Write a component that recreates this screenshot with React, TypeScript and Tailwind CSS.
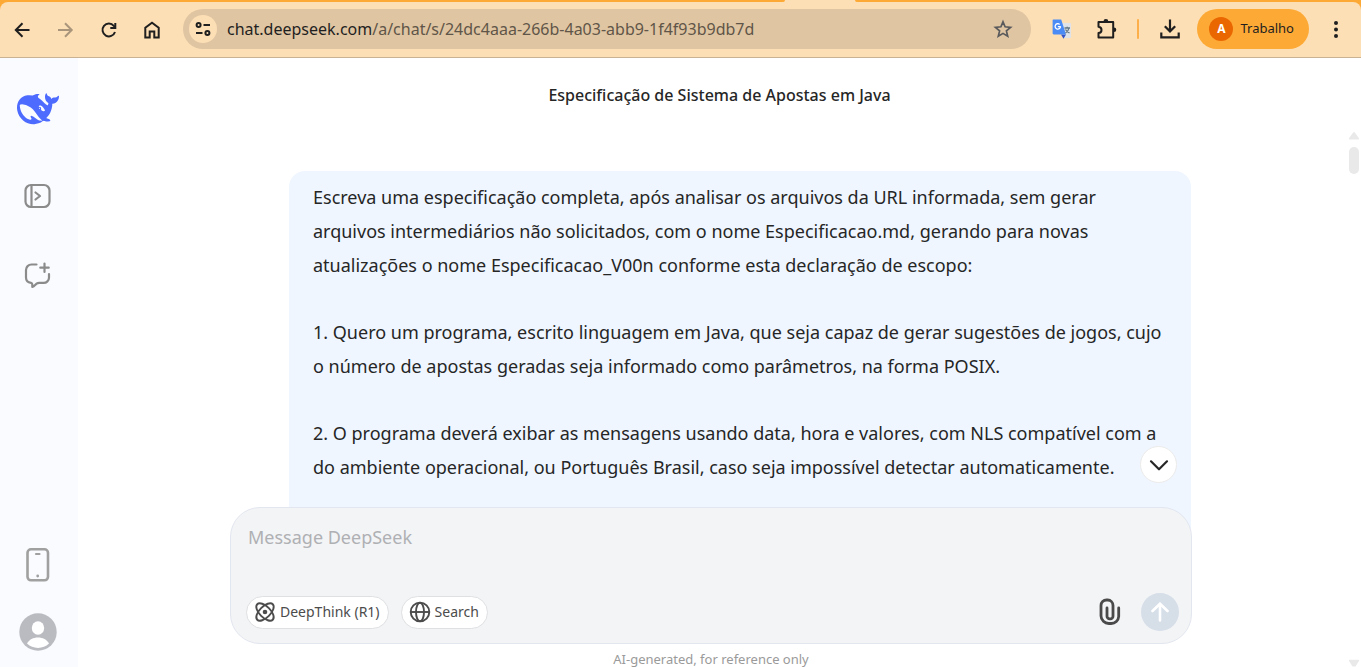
import React from "react";

const iconButton = "flex shrink-0 items-center justify-center";

const paragraphs: string[][] = [
  [
    "Escreva uma especificação completa, após analisar os arquivos da URL informada, sem gerar",
    "arquivos intermediários não solicitados, com o nome Especificacao.md, gerando para novas",
    "atualizações o nome Especificacao_V00n conforme esta declaração de escopo:",
  ],
  [
    "1. Quero um programa, escrito linguagem em Java, que seja capaz de gerar sugestões de jogos, cujo",
    "o número de apostas geradas seja informado como parâmetros, na forma POSIX.",
  ],
  [
    "2. O programa deverá exibar as mensagens usando data, hora e valores, com NLS compatível com a",
    "do ambiente operacional, ou Português Brasil, caso seja impossível detectar automaticamente.",
  ],
];

function TabEdge() {
  return (
    <div className="flex h-[2px] shrink-0 bg-[#fddfb5]" aria-hidden="true">
      <div className="w-[785px] shrink-0 rounded-br-sm bg-[#fda936]" />
      <div className="w-[70px] shrink-0" />
      <div className="grow rounded-bl-sm bg-[#fda936]" />
    </div>
  );
}

function Toolbar() {
  return (
    <div className="shrink-0 bg-[#fda936]">
      <header className="flex h-14 items-center rounded-t-lg border-b border-[#c9b193] bg-[#fddfb5] pb-0.5 pl-2.5 pr-[13px] text-[#1f1f1f]">
        <nav className="flex items-center gap-[19px] pt-0.5" aria-label="Navegação">
          <button type="button" aria-label="Voltar" className={iconButton}>
            <svg width="24" height="24" viewBox="0 0 24 24" fill="none" stroke="currentColor" strokeWidth="2">
              <path d="M19.5 12H6M12.5 5.3L5.8 12l6.7 6.7" />
            </svg>
          </button>
          <button type="button" aria-label="Avançar" className={`${iconButton} text-[#a8957b]`}>
            <svg width="24" height="24" viewBox="0 0 24 24" fill="none" stroke="currentColor" strokeWidth="2">
              <path d="M5 12h13.5M12 5.3l6.7 6.7-6.7 6.7" />
            </svg>
          </button>
          <button type="button" aria-label="Recarregar" className={iconButton}>
            <svg width="24" height="24" viewBox="0 0 24 24" fill="none" stroke="currentColor" strokeWidth="2">
              <path d="M19 14A6.4 6.4 0 1 1 17.8 7.8l1.4 1.6" />
              <path d="M19.3 5v5h-5" />
            </svg>
          </button>
          <button type="button" aria-label="Página inicial" className={iconButton}>
            <svg width="24" height="24" viewBox="0 0 24 24" fill="none" stroke="currentColor" strokeWidth="2">
              <path d="M6.300 19.600V9.700L13 4.700l6.700 5v9.900h-4.400v-6h-4.600v6z" />
            </svg>
          </button>
        </nav>
        <div className="ml-5 flex h-10 min-w-0 grow items-center rounded-full bg-[#dfc5a2] pl-1.5 pr-4">
          <button type="button" aria-label="Informações do site" className="flex size-7 shrink-0 items-center justify-center rounded-full bg-[#fddfb5]">
            <svg width="16" height="16" viewBox="0 0 16 16" fill="none" stroke="currentColor" strokeWidth="2">
              <circle cx="3.6" cy="4" r="2" />
              <path d="M8.5 4H15M1 12h6.5" />
              <circle cx="12.4" cy="12" r="2" />
            </svg>
          </button>
          <div className="ml-2.5 grow truncate text-base text-[#5f5548]">
            <span className="text-[#1f1f1f]">chat.deepseek.com</span>/a/chat/s/24dc4aaa-266b-4a03-abb9-1f4f93b9db7d
          </div>
          <button type="button" aria-label="Adicionar aos favoritos" className={`${iconButton} text-[#5a5a5c]`}>
            <svg width="24" height="24" viewBox="0 0 24 24" fill="none" stroke="currentColor" strokeWidth="1.7">
              <path d="M12 4.8l2.1 5 5.5.5-4.2 3.6 1.3 5.4-4.7-2.9-4.7 2.9 1.3-5.4-4.2-3.6 5.5-.5z" />
            </svg>
          </button>
        </div>
        <div className="flex shrink-0 items-center">
          <button type="button" aria-label="Google Tradutor" className={`${iconButton} ml-[21px]`}>
            <svg width="20" height="20" viewBox="0 0 20 20">
              <path d="M8 4h10.2c.5 0 .8.3.8.8v13.4c0 .5-.3.8-.8.8H12z" fill="#dfe3e8" />
              <path d="M9 15.500h5L11.500 19.800z" fill="#3352c4" />
              <path d="M1.2.5h8L14 15.5H1.8c-.7 0-1.2-.5-1.2-1.2V1.1c0-.3.3-.6.6-.6z" fill="#4b8bf5" />
              <path d="M8.5 7.3a2.7 2.7 0 1 1-.9-1.9M8.5 7.600H5.900" fill="none" stroke="#fff" strokeWidth="1.3" />
              <path d="M12.500 9h5.500M15.200 7.700V9M17 9c-.4 2.300-2 4-3.500 5M13.500 10.500c.8 1.500 2.200 2.700 4 3.500" fill="none" stroke="#647985" strokeWidth="1.3" />
            </svg>
          </button>
          <button type="button" aria-label="Extensões" className={`${iconButton} ml-[22px]`}>
            <svg width="24" height="24" viewBox="0 0 24 24" fill="none" stroke="currentColor" strokeWidth="2">
              <path d="M4.500 5h14.700v15.500H4.500v-4.400c2.200-.3 3-1.700 3-3.200s-.8-2.900-3-3.200z" strokeLinejoin="round" />
              <path d="M9.500 4.300a2.400 2.400 0 0 1 4.800 0zM20 10.400a2.300 2.300 0 0 1 0 4.600z" fill="currentColor" stroke="none" />
            </svg>
          </button>
          <div className="ml-[19px] h-5 w-0.5 rounded-full bg-[#fdb04a]" />
          <button type="button" aria-label="Downloads" className={`${iconButton} ml-[19px]`}>
            <svg width="24" height="24" viewBox="0 0 24 24" fill="none" stroke="currentColor" strokeWidth="2.200">
              <path d="M12 2.500v11.500M6.800 9.200l5.200 5.200 5.200-5.200M3.300 15.500v4.800h17.400v-4.800" />
            </svg>
          </button>
          <button type="button" className="ml-[15px] flex h-10 items-center rounded-full bg-[#fda936] pl-3 pr-[15px] text-[13px]">
            <span className="mr-[7px] flex size-6 items-center justify-center rounded-full bg-[#ea6700] text-xs font-bold text-white">A</span>
            Trabalho
          </button>
          <button type="button" aria-label="Menu" className={`${iconButton} ml-[15px]`}>
            <svg width="24" height="24" viewBox="0 0 24 24" fill="currentColor">
              <circle cx="12" cy="6" r="2" />
              <circle cx="12" cy="12.500" r="2" />
              <circle cx="12" cy="19" r="2" />
            </svg>
          </button>
        </div>
      </header>
    </div>
  );
}

function Whale() {
  return (
    <svg width="42" height="42" viewBox="0 0 24 24" fill="#4d6bfe">
      <path d="M23.748 4.482c-.254-.124-.364.113-.512.234-.051.039-.094.09-.137.136-.372.397-.806.657-1.373.626-.829-.046-1.537.214-2.163.848-.133-.782-.575-1.248-1.247-1.548-.352-.156-.708-.311-.955-.65-.172-.241-.219-.51-.305-.774-.055-.16-.11-.323-.293-.35-.2-.031-.278.136-.356.276-.313.572-.434 1.202-.422 1.84.027 1.436.633 2.58 1.838 3.393.137.093.172.187.129.323-.082.28-.18.552-.266.833-.055.179-.137.217-.329.14a5.526 5.526 0 01-1.736-1.18c-.857-.828-1.631-1.742-2.597-2.458a11.365 11.365 0 00-.689-.471c-.985-.957.13-1.743.388-1.836.27-.098.093-.432-.779-.428-.872.004-1.67.295-2.687.684a3.055 3.055 0 01-.465.137 9.597 9.597 0 00-2.883-.102c-1.885.21-3.39 1.102-4.497 2.623C.082 8.606-.231 10.684.152 12.85c.403 2.284 1.569 4.175 3.36 5.653 1.858 1.533 3.997 2.284 6.438 2.14 1.482-.085 3.133-.284 4.994-1.86.47.234.962.327 1.78.397.63.059 1.236-.03 1.705-.128.735-.156.684-.837.419-.961-2.155-1.004-1.682-.595-2.113-.926 1.096-1.296 2.746-2.642 3.392-7.003.05-.347.007-.565 0-.845-.004-.17.035-.237.23-.256a4.173 4.173 0 001.545-.475c1.396-.763 1.96-2.015 2.093-3.517.02-.23-.004-.467-.247-.588zM11.581 18c-2.089-1.642-3.102-2.183-3.52-2.16-.392.024-.321.471-.235.763.09.288.207.486.371.739.114.167.192.416-.113.603-.673.416-1.842-.14-1.897-.167-1.361-.802-2.5-1.86-3.301-3.307-.774-1.393-1.224-2.887-1.298-4.482-.02-.386.093-.522.477-.592a4.696 4.696 0 011.529-.039c2.132.312 3.946 1.265 5.468 2.774.868.86 1.525 1.887 2.202 2.891.72 1.066 1.494 2.082 2.48 2.914.348.292.625.514.891.677-.802.09-2.14.11-3.054-.614zm1-6.44a.306.306 0 01.415-.287.302.302 0 01.2.288.306.306 0 01-.31.307.303.303 0 01-.304-.308zm3.11 1.596c-.2.081-.399.151-.59.16a1.245 1.245 0 01-.798-.254c-.274-.23-.47-.358-.552-.758a1.73 1.73 0 01.016-.588c.07-.327-.008-.537-.239-.727-.187-.156-.426-.199-.688-.199a.559.559 0 01-.254-.078c-.11-.054-.2-.19-.114-.358.028-.054.16-.186.192-.21.356-.202.767-.136 1.146.016.352.144.618.408 1.001.782.391.451.462.576.685.914.176.265.336.537.445.848.067.195-.019.354-.25.452z" />
    </svg>
  );
}

function Sidebar() {
  return (
    <aside className="flex w-[78px] shrink-0 flex-col items-center bg-[#f9fbff] pb-4 pr-[3px] pt-[30px] text-[#8b8b8b]">
      <a href="#" aria-label="DeepSeek">
        <Whale />
      </a>
      <button type="button" aria-label="Open sidebar" className="mt-[52px]">
        <svg width="28" height="28" viewBox="0 0 28 28" fill="none" stroke="currentColor" strokeWidth="2.200" strokeLinecap="round" strokeLinejoin="round">
          <rect x="1.500" y="3" width="24" height="22" rx="5.500" />
          <path d="M7.500 3v22" />
          <path d="M11.500 10.500l4.500 3.500-4.500 3.500" />
        </svg>
      </button>
      <button type="button" aria-label="New chat" className="mt-[51px]">
        <svg width="28" height="28" viewBox="0 0 28 28" fill="none" stroke="currentColor" strokeWidth="2.200" strokeLinecap="round" strokeLinejoin="round">
          <path d="M12.500 3.500H7.500A5.500 5.500 0 0 0 2 9v7.500c0 3 2 5 5 5.300 1 .2 1.300.8 1.300 1.700v2.500c2-.5 3-2.300 4.300-3.300.8-.6 1.600-.8 2.600-.8h4.300a5.300 5.300 0 0 0 5.500-5.400V13" />
          <path d="M20.500 2.500v8.400M16.300 6.700h8.400" />
        </svg>
      </button>
      <div className="mt-auto flex flex-col items-center gap-[30px]">
        <button type="button" aria-label="Get app">
          <svg width="24" height="36" viewBox="0 0 24 36" fill="none" stroke="#a0a0a0" strokeWidth="2.600" strokeLinecap="round">
            <rect x="1.500" y="2.300" width="20.500" height="31" rx="3.500" />
            <path d="M10 7h3.500" strokeWidth="2.200" />
            <circle cx="11.700" cy="29" r="1.400" fill="#a0a0a0" stroke="none" />
          </svg>
        </button>
        <button type="button" aria-label="Account">
          <svg width="38" height="38" viewBox="0 0 38 38">
            <circle cx="19" cy="19" r="18.700" fill="#babbc1" />
            <ellipse cx="19" cy="15" rx="6.200" ry="6.700" fill="#fff" />
            <path d="M8 30.500c2.200-4 6.300-6 11-6s8.800 2 11 6a16 16 0 0 1-22 0z" fill="#fff" />
          </svg>
        </button>
      </div>
    </aside>
  );
}

const pill =
  "flex h-[33px] items-center gap-1 rounded-full border border-[#dfe0e2] bg-white pl-[7px] pr-2 text-sm text-[#4c4c4c]";

function Composer() {
  return (
    <form
      className="relative flex h-[137px] flex-col justify-between rounded-[30px] border border-[#e2e6ef] bg-[#f3f4f6] pb-3 pl-[15px] pr-3 pt-[15px]"
      onSubmit={(e: React.FormEvent) => e.preventDefault()}
    >
      <button
        type="button"
        aria-label="Scroll to bottom"
        className="absolute -top-[62px] right-3.5 flex size-[37px] items-center justify-center rounded-full border border-[#ecebea] bg-white text-[#262626]"
      >
        <svg width="20" height="20" viewBox="0 0 20 20" fill="none" stroke="currentColor" strokeWidth="2.200" strokeLinecap="round" strokeLinejoin="round">
          <path d="M2 6.300l8 8 8-8" />
        </svg>
      </button>
      <textarea
        aria-label="Message DeepSeek"
        placeholder="Message DeepSeek"
        rows={1}
        className="block h-7 w-full resize-none overflow-hidden bg-transparent pl-0.5 text-lg text-[#262626] outline-none placeholder:text-[#afb0b3]"
      />
      <div className="flex items-center">
        <button type="button" className={pill}>
          <svg width="22" height="22" viewBox="0 0 22 22" fill="none" stroke="currentColor" strokeWidth="1.900">
            <ellipse cx="11" cy="11" rx="11" ry="5.500" transform="rotate(45 11 11)" />
            <ellipse cx="11" cy="11" rx="11" ry="5.500" transform="rotate(-45 11 11)" />
            <circle cx="11" cy="11" r="2.300" fill="currentColor" stroke="none" />
          </svg>
          DeepThink (R1)
        </button>
        <button type="button" className={`${pill} ml-3`}>
          <svg width="22" height="22" viewBox="0 0 22 22" fill="none" stroke="currentColor" strokeWidth="1.900">
            <circle cx="11" cy="11" r="9.300" />
            <ellipse cx="11" cy="11" rx="4" ry="9.300" />
            <path d="M1.700 11h18.600" />
          </svg>
          Search
        </button>
        <button type="button" aria-label="Attach file" className="ml-auto text-[#4a4a4a]">
          <svg width="22" height="28" viewBox="0 0 22 28" fill="none" stroke="currentColor" strokeWidth="2.800" strokeLinecap="round">
            <path d="M19.700 10v8.500a7.500 7.500 0 0 1-7.500 7h-2.400a7.800 7.800 0 0 1-7.800-7.500V7.500A5.500 5.500 0 0 1 7.500 2h1.200a5.500 5.500 0 0 1 5.300 5.500v10.700a2.600 2.600 0 0 1-2.600 2.600h-.8a2.600 2.600 0 0 1-2.600-2.600V10" />
          </svg>
        </button>
        <button type="submit" aria-label="Send" className="ml-5 flex size-[38px] items-center justify-center rounded-full bg-[#d6dee8] text-white">
          <svg width="20" height="20" viewBox="0 0 20 20" fill="none" stroke="currentColor" strokeWidth="2.600" strokeLinecap="round">
            <path d="M10 18.500V2M2.500 9L10 1.700 17.500 9" />
          </svg>
        </button>
      </div>
    </form>
  );
}

function Scrollbar() {
  return (
    <div className="flex w-[17px] shrink-0 flex-col items-center pl-[3px] pt-2.5" aria-hidden="true">
      <svg width="12" height="10" viewBox="0 0 12 10" fill="#e9e9e9">
        <path d="M5 1.800q1-1.400 2 0l4 5.500q.6 1.200-.8 1.200H1.800q-1.400 0-.8-1.200z" />
      </svg>
      <div className="mt-1.5 h-[27px] w-2.5 rounded-full bg-[#e9e9e9]" />
      <svg className="mt-auto" width="12" height="8" viewBox="0 0 12 8" fill="#e9e9e9">
        <path d="M1.800.700h8.400q1.400 0 .8 1.200L7.500 7.500h-3L1 1.900Q.4.700 1.800.700z" />
      </svg>
    </div>
  );
}

export default function App() {
  return (
    <div className="flex h-screen flex-col overflow-hidden bg-white font-['Noto_Sans','Open_Sans',sans-serif]">
      <TabEdge />
      <Toolbar />
      <div className="flex min-h-0 grow">
        <Sidebar />
        <main className="flex min-w-0 grow flex-col">
          <h1 className="shrink-0 pb-3.5 pt-[25px] text-center text-base font-medium leading-6 text-[#262626]">
            Especificação de Sistema de Apostas em Java
          </h1>
          <div className="flex min-h-0 grow">
            <div className="flex min-w-0 grow flex-col items-center">
              <div className="flex min-h-0 w-full max-w-[962px] grow flex-col pt-[50px]">
                <article className="ml-[59px] mr-px flex min-h-0 grow flex-col gap-[33px] overflow-hidden rounded-t-2xl bg-[#eff6ff] px-6 pt-[9px] text-lg leading-[34px] text-[#262626]">
                  {paragraphs.map((lines) => (
                    <p key={lines[0]} className="shrink-0">
                      {lines.map((line) => (
                        <span key={line} className="block whitespace-nowrap">
                          {line}
                        </span>
                      ))}
                    </p>
                  ))}
                </article>
              </div>
              <div className="relative -mt-10 w-full max-w-[962px] shrink-0">
                <Composer />
                <p className="pt-[7px] text-center text-[13px] leading-4 text-[#9a9a9a]">AI-generated, for reference only</p>
              </div>
            </div>
            <Scrollbar />
          </div>
        </main>
      </div>
    </div>
  );
}
